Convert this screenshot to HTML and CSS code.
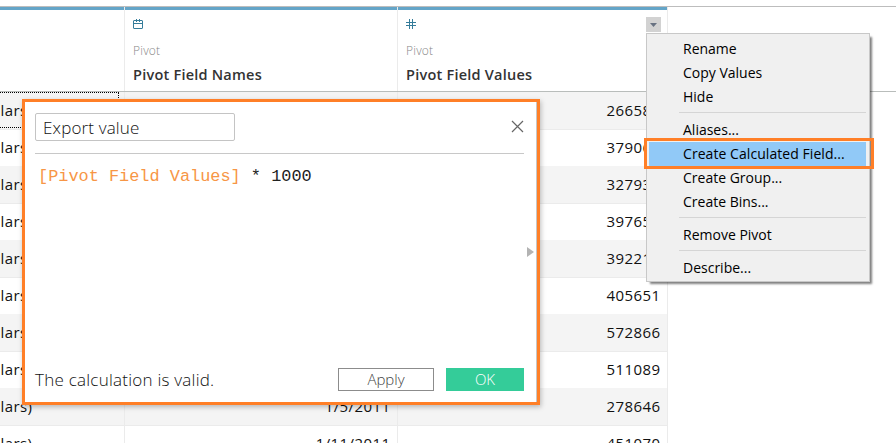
FILE: index.html
```html
<!DOCTYPE html>
<html lang="en">
<head>
<meta charset="utf-8">
<title>Data source grid</title>
<link rel="stylesheet" href="styles.css">
</head>
<body>
<main class="grid">
  <header class="row head">
    <div class="col first"></div>
    <div class="col second">
      <svg class="type" width="12" height="12" viewBox="0 0 12 12" fill="none" stroke="#357c9a"><rect x=".5" y="1.5" width="9" height="8" rx=".5"/><path d="M.5 4.5h9M3.5 0v3M6.5 0v3"/></svg>
      <span class="source">Pivot</span><strong class="name">Pivot Field Names</strong>
    </div>
    <div class="col third">
      <svg class="type" width="12" height="12" viewBox="0 0 12 12" fill="none" stroke="#357c9a"><path d="M0 3.5h10M0 6.5h10M3.5 0v10M6.5 0v10"/></svg>
      <span class="source">Pivot</span><strong class="name">Pivot Field Values</strong>
      <button class="drop"><svg width="15" height="15" viewBox="0 0 15 15"><path d="M4 6h7L7.5 10z" fill="#687282"/></svg></button>
    </div>
  </header>
  <div class="row"><div class="col first selected">lars)</div><div class="col second"></div><div class="col third">266580</div></div>
  <div class="row"><div class="col first">lars)</div><div class="col second"></div><div class="col third">379060</div></div>
  <div class="row"><div class="col first">lars)</div><div class="col second"></div><div class="col third">327930</div></div>
  <div class="row"><div class="col first">lars)</div><div class="col second"></div><div class="col third">397650</div></div>
  <div class="row"><div class="col first">lars)</div><div class="col second"></div><div class="col third">392210</div></div>
  <div class="row"><div class="col first">lars)</div><div class="col second"></div><div class="col third">405651</div></div>
  <div class="row"><div class="col first">lars)</div><div class="col second"></div><div class="col third">572866</div></div>
  <div class="row"><div class="col first">lars)</div><div class="col second"></div><div class="col third">511089</div></div>
  <div class="row"><div class="col first">lars)</div><div class="col second">1/5/2011</div><div class="col third">278646</div></div>
  <div class="row"><div class="col first">lars)</div><div class="col second">1/11/2011</div><div class="col third">451070</div></div>
</main>

<section class="dialog">
  <div class="titlebar">
    <div class="field">Export value</div>
    <svg class="close" width="13" height="13" viewBox="0 0 13 13" fill="none" stroke="#666" stroke-width="1.2"><path d="M1 1l11 11M12 1L1 12"/></svg>
  </div>
  <div class="formula"><span class="ref">[Pivot Field Values]</span> * 1000</div>
  <div class="actions"><span class="status">The calculation is valid.</span><button class="apply">Apply</button><button class="ok">OK</button></div>
  <svg class="expand" width="7" height="10" viewBox="0 0 7 10"><path d="M0 0l7 5-7 5z" fill="#b3b3b3"/></svg>
</section>

<nav class="menu">
  <div class="item">Rename</div>
  <div class="item">Copy Values</div>
  <div class="item">Hide</div>
  <div class="sep"></div>
  <div class="item">Aliases...</div>
  <div class="item active">Create Calculated Field...</div>
  <div class="item">Create Group...</div>
  <div class="item">Create Bins...</div>
  <div class="sep"></div>
  <div class="item">Remove Pivot</div>
  <div class="sep"></div>
  <div class="item">Describe...</div>
</nav>
</body>
</html>
```
FILE: styles.css
```css
*, *::before, *::after { box-sizing: border-box; }
body { margin: 0; height: 443px; overflow: hidden; position: relative; background: #fff; color: #111; font: 15px "Open Sans", sans-serif; }
button { font: inherit; padding: 0; border: 0; }
.grid { margin-top: 6px; border-top: 1px solid #bdbdbd; }
.row { display: grid; grid-template-columns: 125px 273px 270px; height: 37px; }
.head { height: 85px; border-bottom: 1px solid #b9bdbb; }
.col { border-right: 1px solid #ebebeb; border-bottom: 1px solid #ebebeb; padding: 0 6.5px; line-height: 37px; text-align: right; letter-spacing: .42px; }
.row:nth-child(even) .col { background: #f4f4f4; }
.col.first { padding-left: .5px; text-align: left; }
.col.selected { position: relative; }
.col.selected::after { content: ""; position: absolute; left: -2px; top: 0; width: 121px; height: 36px; border: 1px dotted #000; }
.head .col { display: flex; flex-direction: column; border-bottom: 0; position: relative; padding: 12px 8px 0; line-height: 20px; text-align: left; }
.head .col::before { content: ""; position: absolute; inset: 0 0 auto; height: 3px; background: #64a5c8; }
.source { margin-top: 10px; font-size: 12px; letter-spacing: .2px; color: #888; font-weight: 300; }
.name { margin-top: 4px; font-size: 14.5px; font-weight: 600; letter-spacing: .23px; color: #333; }
.drop { position: absolute; right: 6px; top: 10px; width: 15px; height: 15px; background: #d2d2d2; }
.drop svg { display: block; }

.dialog { position: absolute; left: 22px; top: 99px; width: 518px; height: 306px; padding: 0 12px 0 10px; border: 3px solid #ff7f27; background: #fff; box-shadow: inset -1px 0 #c6c6c6, 1px 2px 5px rgba(0,0,0,.25); display: flex; flex-direction: column; }
.titlebar { display: flex; justify-content: space-between; height: 52px; padding-top: 11px; border-bottom: 1px solid #c8c8c8; margin-right: 1px; }
.field { width: 200px; height: 28px; border: 1px solid #c4c4c4; border-radius: 2px; padding-left: 7px; line-height: 28px; font-size: 17px; font-weight: 300; letter-spacing: .15px; color: #111; }
.close { margin-top: 7px; }
.formula { flex: 1; padding: 13px 0 0 3px; font: 16.9px/20px "Liberation Mono", monospace; color: #222; white-space: pre; }
.ref { color: #f79646; }
.actions { display: flex; align-items: center; height: 23px; margin: 0 1px 11px 0; color: #111; }
.status { flex: 1; font-size: 17px; font-weight: 300; letter-spacing: .24px; }
.apply { width: 96px; height: 23px; border: 1px solid #8c8c8c; background: #fff; color: #444; margin-right: 12px; }
.ok { width: 78px; height: 23px; background: #34cc99; color: #fff; }
.apply, .ok { line-height: 21px; font-weight: 300; }
.expand { position: absolute; left: 502px; top: 145px; }

.menu { position: absolute; left: 646px; top: 33px; width: 224px; height: 249px; border: 1px solid #c8c8c8; background: #f0f0f0; padding: 3px 3px 0 2px; box-shadow: 3px 3px 2px -1px rgba(0,0,0,.5); font-size: 14px; color: #000; }
.item { height: 24px; line-height: 24px; padding-left: 34px; white-space: nowrap; }
.sep { height: 9px; border-top: 1px solid #d5d5d5; margin-left: 30px; transform: translateY(3px); }
.active { position: relative; background: #91c9f7; letter-spacing: .06px; }
.active::after { content: ""; position: absolute; left: -5px; top: -4px; width: 230px; height: 31px; border: 3px solid #ff7f27; }
```
